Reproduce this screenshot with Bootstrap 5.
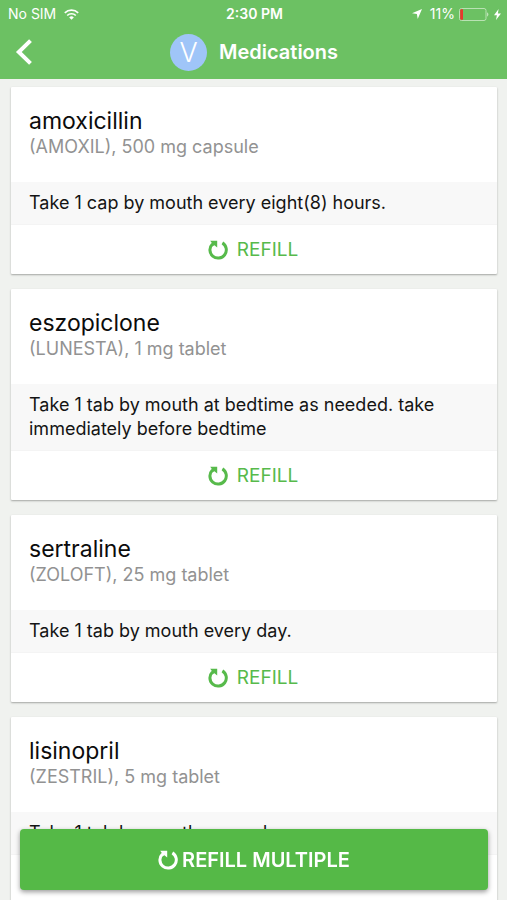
<!DOCTYPE html>
<html lang="en">
<head>
<meta charset="utf-8">
<meta name="viewport" content="width=device-width, initial-scale=1">
<title>Medications</title>
<link href="https://cdn.jsdelivr.net/npm/bootstrap@5.3.0/dist/css/bootstrap.min.css" rel="stylesheet">
<style>
  body { font-family: Inter, "Liberation Sans", sans-serif; background: #f0f2ef; color: #141414; }
  .app-header { background: #6cc163; }
  .status-bar { height: 28px; font-size: 14px; line-height: 28px; padding: 0 6px 0 8px; }
  .status-side { flex: 1 1 0; }
  .title-bar { height: 51px; padding: 0 13px 3px 14px; }
  .title-bar h1 { font-size: 20px; line-height: 24px; }
  .back-btn { width: 22px; }
  .side-slot { flex: 1 1 0; }
  .avatar { width: 37px; height: 37px; background: #9fc5f8; font-size: 27px; font-weight: 300; line-height: 37px; }
  .med-list { padding: 8px 10px 88px 11px; gap: 15px; scrollbar-width: none; }
  .med-list::-webkit-scrollbar { display: none; }
  .med-card { background: #fff; border-radius: 1px; box-shadow: 0 1px 2px rgba(0,0,0,.32); }
  .med-head { padding: 20px 18px 24px; }
  .med-head h2 { font-size: 23px; line-height: 29px; font-weight: 400; color: #0c0c0c; }
  .med-head p { font-size: 18px; line-height: 22px; color: #929292; }
  .med-note { background: #f8f8f8; border-bottom: 1px solid #f4f4f4; padding: 9px 18px; font-size: 18px; line-height: 24px; }
  .refill-btn { height: 49px; color: #57ba4b; font-size: 19px; line-height: 24px; gap: 9px; padding: 0 2px 0 0; }
  .refill-all-wrap { padding: 0 19px 10px 20px; }
  .refill-all { height: 61px; background: #55b947; font-size: 20px; line-height: 24px; gap: 4px; border-radius: 4px; box-shadow: 0 2px 5px rgba(0,0,0,.4); }
</style>
<script src="https://cdn.jsdelivr.net/npm/bootstrap@5.3.0/dist/js/bootstrap.bundle.min.js" defer></script>
</head>
<body class="vh-100 d-flex flex-column overflow-hidden">
<svg class="d-none" aria-hidden="true">
  <symbol id="refresh" viewBox="0 0 20 20">
    <path d="M14.4 2.9A8.2 8.2 0 1 1 4.4 4" fill="none" stroke="currentColor" stroke-width="3"/>
    <path d="M2.2 .8H9.2V7.4L6.4 5.2 4.2 6.4 2.6 5.4 4 3.2Z" fill="currentColor"/>
  </symbol>
</svg>
<header class="app-header text-white flex-shrink-0">
  <div class="status-bar d-flex align-items-center">
    <div class="status-side d-flex align-items-center gap-2">
      <span>No SIM</span>
      <svg width="15" height="11" viewBox="0 0 15 11" fill="none" stroke="#fff" stroke-width="1.7" aria-label="Wi-Fi"><path d="M.8 3.9a9.7 9.7 0 0 1 13.4 0M3.2 6.5a6.2 6.2 0 0 1 8.6 0"/><path d="M7.5 10.8 5.2 8.4a3.3 3.3 0 0 1 4.6 0Z" fill="#fff" stroke="none"/></svg>
    </div>
    <span class="fw-semibold">2:30 PM</span>
    <div class="status-side d-flex align-items-center justify-content-end">
      <svg class="me-2" width="10" height="10" viewBox="0 0 10 10" fill="#fff" aria-label="Location"><path d="M10 0 5.7 10 4.9 5.1 0 4.2Z"/></svg>
      <span>11%</span>
      <svg class="ms-1" width="31" height="13" viewBox="0 0 31 13" aria-label="Battery"><rect x=".5" y=".5" width="26.5" height="12" rx="2" fill="none" stroke="#b9e2b3"/><path d="M1.2 2Q1.2 1.2 2 1.2H4V11.8H2Q1.2 11.8 1.2 11Z" fill="#e8382c"/><path d="M28.3 4.3Q30.3 6.5 28.3 8.7Z" fill="#e3f4e0"/></svg>
      <svg class="ms-1" width="7" height="11" viewBox="0 0 7 11" fill="#fff" aria-label="Charging"><path d="M4.6 0 0 6.2H2.9L2 11 7 4.5H3.9Z"/></svg>
    </div>
  </div>
  <div class="title-bar d-flex align-items-center">
    <div class="side-slot">
      <button class="back-btn btn border-0 p-0 d-flex" aria-label="Back"><svg width="20" height="26" viewBox="0 0 20 26" fill="none" stroke="#fff" stroke-width="4"><path d="M16.5 1.6 4.8 13 16.5 24.4"/></svg></button>
    </div>
    <div class="avatar rounded-circle text-center">V</div>
    <h1 class="fw-semibold mb-0 ms-2 ps-1">Medications</h1>
    <div class="side-slot"></div>
  </div>
</header>
<main class="med-list d-flex flex-column flex-grow-1 overflow-auto">
  <article class="med-card flex-shrink-0">
    <div class="med-head"><h2 class="mb-0">amoxicillin</h2><p class="mb-0">(AMOXIL), 500 mg capsule</p></div>
    <div class="med-note">Take 1 cap by mouth every eight(8) hours.</div>
    <button class="refill-btn btn border-0 w-100 d-flex align-items-center justify-content-center"><svg width="20" height="20" aria-hidden="true"><use href="#refresh"/></svg>REFILL</button>
  </article>
  <article class="med-card flex-shrink-0">
    <div class="med-head"><h2 class="mb-0">eszopiclone</h2><p class="mb-0">(LUNESTA), 1 mg tablet</p></div>
    <div class="med-note">Take 1 tab by mouth at bedtime as needed. take immediately before bedtime</div>
    <button class="refill-btn btn border-0 w-100 d-flex align-items-center justify-content-center"><svg width="20" height="20" aria-hidden="true"><use href="#refresh"/></svg>REFILL</button>
  </article>
  <article class="med-card flex-shrink-0">
    <div class="med-head"><h2 class="mb-0">sertraline</h2><p class="mb-0">(ZOLOFT), 25 mg tablet</p></div>
    <div class="med-note">Take 1 tab by mouth every day.</div>
    <button class="refill-btn btn border-0 w-100 d-flex align-items-center justify-content-center"><svg width="20" height="20" aria-hidden="true"><use href="#refresh"/></svg>REFILL</button>
  </article>
  <article class="med-card flex-shrink-0">
    <div class="med-head"><h2 class="mb-0">lisinopril</h2><p class="mb-0">(ZESTRIL), 5 mg tablet</p></div>
    <div class="med-note">Take 1 tab by mouth every day.</div>
    <button class="refill-btn btn border-0 w-100 d-flex align-items-center justify-content-center"><svg width="20" height="20" aria-hidden="true"><use href="#refresh"/></svg>REFILL</button>
  </article>
</main>
<div class="refill-all-wrap fixed-bottom">
  <button class="refill-all btn border-0 w-100 p-0 text-white fw-semibold d-flex align-items-center justify-content-center"><svg width="20" height="20" aria-hidden="true"><use href="#refresh"/></svg>REFILL MULTIPLE</button>
</div>
</body>
</html>
